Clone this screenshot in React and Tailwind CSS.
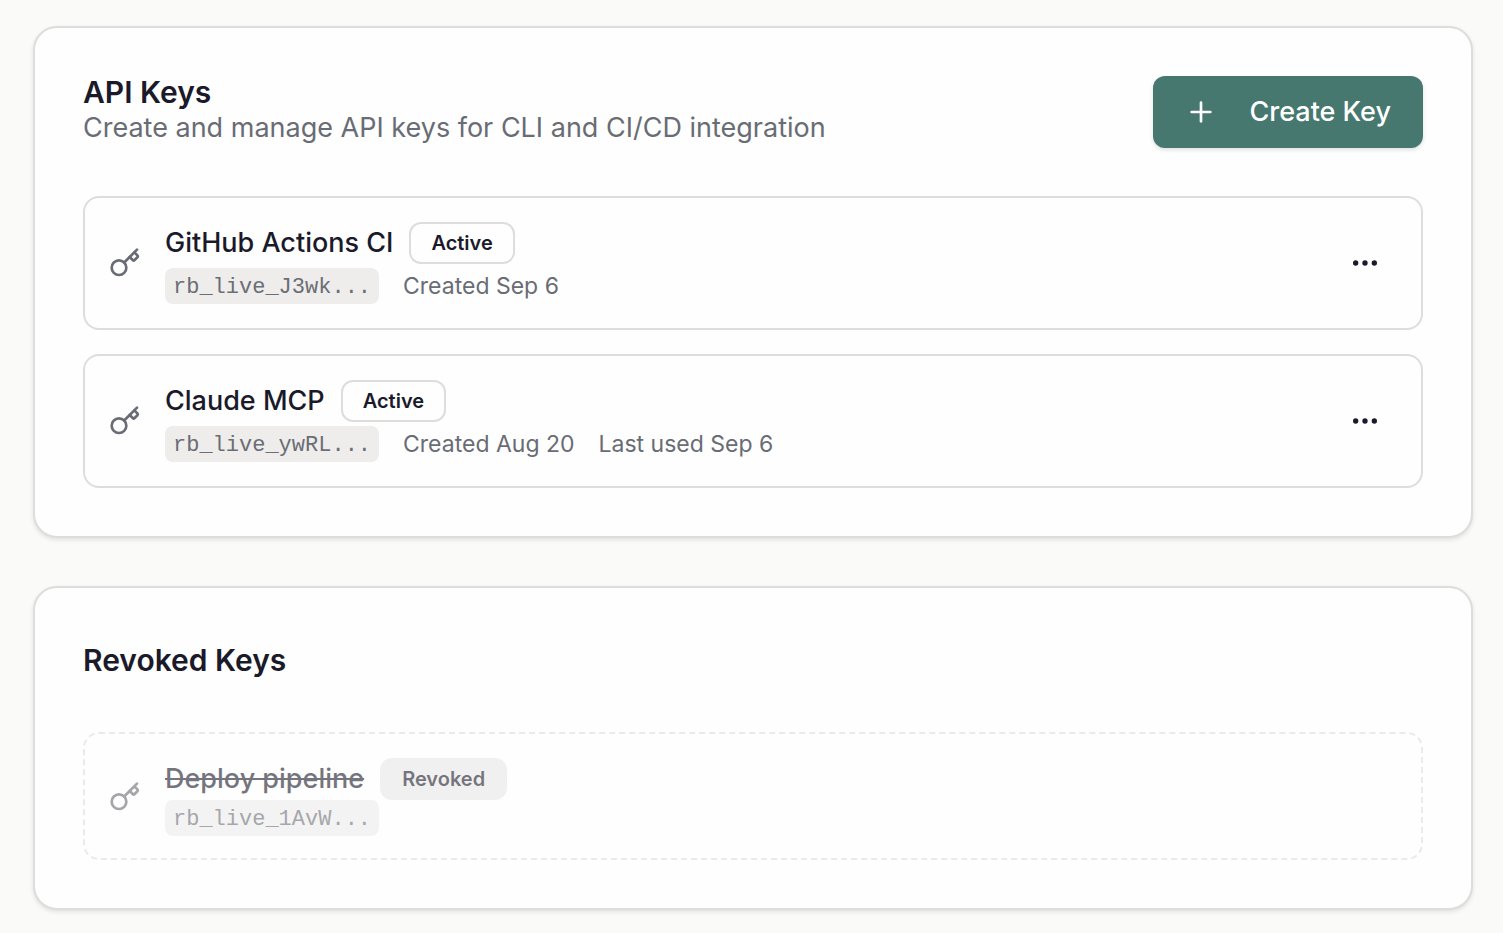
import { Ellipsis, Key, Plus } from "lucide-react";

const activeKeys = [
  {
    id: 1,
    name: "GitHub Actions CI",
    prefix: "rb_live_J3wk...",
    created: "Sep 6",
    lastUsed: null,
  },
  {
    id: 2,
    name: "Claude MCP",
    prefix: "rb_live_ywRL...",
    created: "Aug 20",
    lastUsed: "Sep 6",
  },
];

const revokedKeys = [
  { id: 3, name: "Deploy pipeline", prefix: "rb_live_1AvW..." },
];

function Card({ children }) {
  return (
    <section className="flex flex-col gap-12 rounded-3xl border-2 border-[#dddedb] bg-[#fefefe] p-12 shadow-[0_2px_4px_rgba(0,0,0,0.1)]">
      {children}
    </section>
  );
}

function KeyPrefix({ children }) {
  return (
    <code className="rounded-lg bg-[#eeedec] px-2 pt-1 font-['Liberation_Mono',monospace] text-[22px] leading-8 text-[#6b6e75]">
      {children}
    </code>
  );
}

function ActiveKey({ item }) {
  return (
    <li className="flex items-center gap-6 rounded-2xl border-2 border-[#dddddb] p-6">
      <Key className="size-8 shrink-0 text-[#696c74]" />
      <div className="flex flex-1 flex-col gap-1">
        <div className="flex items-center gap-4">
          <h3 className="text-[27px] leading-10 font-medium text-[#1a1a2a]">
            {item.name}
          </h3>
          <span className="rounded-xl border-2 border-[#dddddb] px-5 text-xl leading-[38px] font-semibold text-[#1a1a2a]">
            Active
          </span>
        </div>
        <div className="flex items-center gap-6 text-[23px] leading-8 text-[#696c74]">
          <KeyPrefix>{item.prefix}</KeyPrefix>
          <span>Created {item.created}</span>
          {item.lastUsed && <span>Last used {item.lastUsed}</span>}
        </div>
      </div>
      <button
        type="button"
        aria-label={`Options for ${item.name}`}
        className="flex size-16 items-center justify-center rounded-xl text-[#1a1a2a]"
      >
        <Ellipsis className="size-8" />
      </button>
    </li>
  );
}

function RevokedKey({ item }) {
  return (
    <li className="flex items-center gap-6 rounded-2xl border-2 border-dashed border-[#dddddb] px-6 pt-6 pb-[22px] opacity-60">
      <Key className="size-8 shrink-0 text-[#696c74]" />
      <div className="flex flex-col items-start">
        <div className="flex items-center gap-4">
          <h3 className="text-[27px] leading-10 font-medium text-[#1a1a2a] line-through">
            {item.name}
          </h3>
          <span className="rounded-xl bg-[#e9e8e7] px-[22px] text-xl leading-[42px] font-semibold text-[#1a1a2a]">
            Revoked
          </span>
        </div>
        <KeyPrefix>{item.prefix}</KeyPrefix>
      </div>
    </li>
  );
}

export default function App() {
  return (
    <main className="flex min-h-screen flex-col gap-12 bg-[#fafaf8] pt-[26px] pr-[30px] pb-6 pl-[33px] font-[Inter,sans-serif]">
      <Card>
        <header className="flex items-center justify-between">
          <div>
            <h2 className="text-[30px] leading-8 font-semibold text-[#1a1a2a]">
              API Keys
            </h2>
            <p className="text-[27px] leading-10 text-[#696c74]">
              Create and manage API keys for CLI and CI/CD integration
            </p>
          </div>
          <button
            type="button"
            className="flex h-[72px] items-center gap-8 rounded-xl bg-[#46786f] px-8 text-[27px] font-medium text-white shadow-[0_2px_4px_rgba(0,0,0,0.12)]"
          >
            <Plus className="size-8" />
            Create Key
          </button>
        </header>
        <ul className="flex flex-col gap-6">
          {activeKeys.map((item) => (
            <ActiveKey key={item.id} item={item} />
          ))}
        </ul>
      </Card>

      <Card>
        <h2 className="text-[30px] leading-[48px] font-semibold text-[#1a1a2a]">
          Revoked Keys
        </h2>
        <ul className="flex flex-col gap-6">
          {revokedKeys.map((item) => (
            <RevokedKey key={item.id} item={item} />
          ))}
        </ul>
      </Card>
    </main>
  );
}
